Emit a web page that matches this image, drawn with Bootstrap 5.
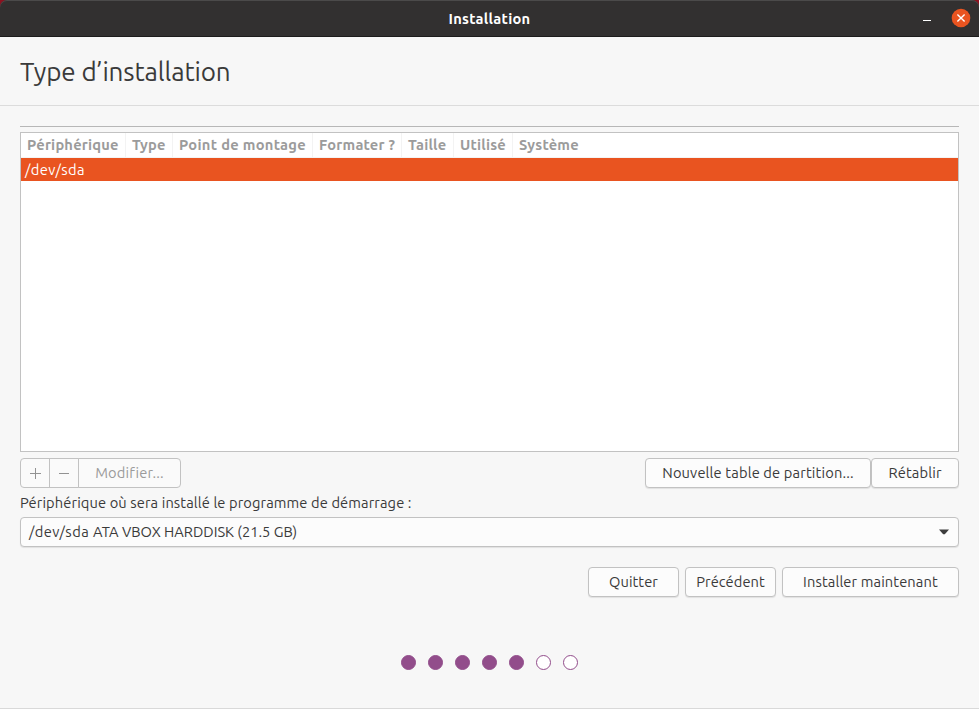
<!DOCTYPE html>
<html lang="fr">
<head>
<meta charset="utf-8">
<title>Installation</title>
<meta name="viewport" content="width=device-width, initial-scale=1">
<link href="https://cdn.jsdelivr.net/npm/bootstrap@5.3.0/dist/css/bootstrap.min.css" rel="stylesheet">
<script src="https://cdn.jsdelivr.net/npm/bootstrap@5.3.0/dist/js/bootstrap.bundle.min.js"></script>
<style>
  :root { --edge: #c2c2c2; --ink: #3a3a3a; --accent: #e95420; --plum: #924d8b; }
  body { font: 14.667px/20px Ubuntu, "Noto Sans", "Open Sans", sans-serif; color: var(--ink); background: #f7f7f7; letter-spacing: .15px; }
  .desktop { height: 709px; background: #8c1220; overflow: hidden; }
  .window { height: 709px; background: linear-gradient(#0000 37px, #f7f7f7 37px); border-bottom: 1px solid #d9d9d9; }
  .titlebar { height: 37px; background: #323030; color: #fff; border-bottom: 1px solid #1d1c1c; border-radius: 7px 7px 0 0; box-shadow: inset 0 1px #4b4a4a; display: grid; grid-template-columns: 1fr auto 1fr; }
  .titlebar strong { padding-top: 2px; letter-spacing: .25px; }
  .heading { height: 69px; border-bottom: 1px solid #dcdcdc; padding: 1px 20px 0; }
  .heading h1 { font-size: 26px; line-height: 34px; letter-spacing: -.12px; font-weight: 400; }
  .content { width: 939px; padding-top: 20px; }
  .rule { height: 1px; background: #b7b7b7; }
  .tree { height: 320px; border: 1px solid var(--edge); margin-top: 5px; }
  .tree-head { height: 25px; border-bottom: 1px solid #f4f4f4; color: #9b9b9b; font-weight: 700; letter-spacing: .2px; }
  .tree-head > div { border-right: 1px solid #f3f3f3; padding: 2px 0 0 6px; white-space: nowrap; }
  .tree-head > div:last-child { border-right: 0; }
  .w1 { width: 105px; } .w2 { width: 47px; } .w3 { width: 140px; letter-spacing: .3px; } .w4 { width: 89px; } .w5 { width: 52px; } .w6 { width: 59px; }
  .tree-row { height: 23px; background: var(--accent); color: #fff; padding: 2px 0 0 4px; letter-spacing: .42px; }
  .push { --bs-btn-font-size: 14.667px; --bs-btn-line-height: 20px; --bs-btn-color: var(--ink); --bs-btn-bg: #fcfcfc; --bs-btn-border-color: var(--edge); --bs-btn-border-radius: 4px; --bs-btn-padding-x: 0; --bs-btn-padding-y: 0; --bs-btn-disabled-color: #9b9b9b; --bs-btn-disabled-bg: #fafafa; --bs-btn-disabled-border-color: var(--edge); --bs-btn-disabled-opacity: 1; height: 30px; padding-bottom: 1px; white-space: nowrap; letter-spacing: .15px; box-shadow: 0 1px 1px rgba(0,0,0,.09); }
  .push:disabled { box-shadow: none; }
  .sq { width: 30px; } .edit { width: 103px; }
  .b-new { width: 226px; } .b-reset { width: 88px; } .b-quit { width: 91px; letter-spacing: .05px; } .b-next { width: 177px; letter-spacing: .12px; }
  .combo { padding: 0 9px 1px 8px; letter-spacing: 0; }
  .device-path { letter-spacing: .45px; }
  .device-label { padding: 5px 0 4px; letter-spacing: .11px; }
  .gap-6 { gap: 6px; }
  .tools { margin-top: 6px; }
  .actions { margin-top: 20px; }
  .steps { gap: 12px; margin-top: 58px; }
  .step { width: 15px; height: 15px; border: 1px solid var(--plum); background: #fff; }
  .step.done { background: var(--plum); }
</style>
</head>
<body>
<div class="desktop">
<div class="window d-flex flex-column">
  <header class="titlebar align-items-center">
    <span></span>
    <strong>Installation</strong>
    <span class="d-flex justify-content-end align-items-center">
      <svg width="60" height="36" viewBox="0 0 60 36" aria-label="Réduire, Fermer">
        <path d="M4 20.5h8" stroke="#fff"/>
        <circle cx="42" cy="18" r="9.3" fill="#e95420"/>
        <path d="M38.4 14.4l7.2 7.2m0-7.2l-7.2 7.2" stroke="#fff" stroke-width="1.4"/>
      </svg>
    </span>
  </header>
  <div class="heading d-flex align-items-center"><h1 class="m-0">Type d’installation</h1></div>
  <main class="content mx-auto">
    <div class="rule"></div>
    <div class="tree bg-white">
      <div class="tree-head d-flex">
        <div class="w1">Périphérique</div>
        <div class="w2">Type</div>
        <div class="w3">Point de montage</div>
        <div class="w4">Formater ?</div>
        <div class="w5">Taille</div>
        <div class="w6">Utilisé</div>
        <div>Système</div>
      </div>
      <div class="tree-row">/dev/sda</div>
    </div>
    <div class="tools d-flex justify-content-between">
      <div class="btn-group">
        <button class="btn push sq d-flex align-items-center justify-content-center flex-grow-0" disabled aria-label="Ajouter"><svg width="12" height="12" viewBox="0 0 12 12"><path d="M1 6.5h11M6.5 1v11" stroke="#929292"/></svg></button>
        <button class="btn push sq d-flex align-items-center justify-content-center flex-grow-0" disabled aria-label="Supprimer"><svg width="12" height="12" viewBox="0 0 12 12"><path d="M1 6.5h10" stroke="#929292"/></svg></button>
        <button class="btn push edit flex-grow-0" disabled>Modifier...</button>
      </div>
      <div class="d-flex">
        <button class="btn push b-new">Nouvelle table de partition...</button>
        <button class="btn push b-reset">Rétablir</button>
      </div>
    </div>
    <div class="device-label">Périphérique où sera installé le programme de démarrage :</div>
    <button class="btn push combo w-100 d-flex align-items-center justify-content-between">
      <span><span class="device-path">/dev/sda </span>ATA VBOX HARDDISK (21.5 GB)</span>
      <svg width="10" height="6" viewBox="0 0 10 6"><path d="M0 .5h10L5.8 5.2H4.2z" fill="#3d3d3d"/></svg>
    </button>
    <div class="actions d-flex justify-content-end gap-6">
      <button class="btn push b-quit">Quitter</button>
      <button class="btn push b-quit">Précédent</button>
      <button class="btn push b-next">Installer maintenant</button>
    </div>
    <div class="steps d-flex justify-content-center">
      <span class="step done rounded-circle"></span><span class="step done rounded-circle"></span><span class="step done rounded-circle"></span><span class="step done rounded-circle"></span><span class="step done rounded-circle"></span><span class="step rounded-circle"></span><span class="step rounded-circle"></span>
    </div>
  </main>
</div>
</div>
</body>
</html>
